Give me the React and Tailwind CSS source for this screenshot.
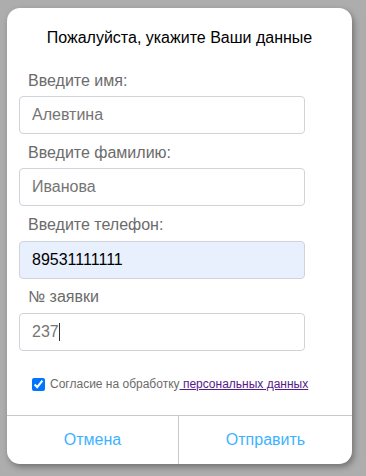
const fields = [
  { label: 'Введите имя:', value: 'Алевтина' },
  { label: 'Введите фамилию:', value: 'Иванова' },
  { label: 'Введите телефон:', value: '89531111111', filled: true, tall: true },
  { label: '№ заявки', value: '237', caret: true, tall: true, tight: true },
];

function Field({ label, value, filled, caret, tall, tight }) {
  return (
    <div className={'flex flex-col ' + (tight ? 'mt-[9px]' : 'mt-[10px]')}>
      <div className={(tall ? 'h-[25px]' : 'h-[24px]') + ' pl-[9px] text-[16px] leading-[18px] text-[#6b6b6b]'}>{label}</div>
      <div
        className={
          'w-[286px] h-[38px] rounded-[4px] border border-[#cfd3da] pl-[12px] flex items-center text-[16px] ' +
          (filled ? 'bg-[#e8f0fe] text-black' : 'bg-white text-[#757575]')
        }
      >
        <span>{value}</span>
        {caret && <span className="inline-block w-px h-[18px] bg-[#333]" />}
      </div>
    </div>
  );
}

export default function App() {
  return (
    <div className="w-[366px] h-[476px] bg-[#adadad] pt-[8px] pl-[7px] font-['Liberation_Sans',Arial,sans-serif]">
      <div className="w-[345px] h-[456px] bg-white rounded-[13px] shadow-[2px_3px_6px_rgba(0,0,0,0.35)] flex flex-col overflow-hidden">
        <div className="pt-[21px] text-center text-[16px] leading-[18px] text-black">
          Пожалуйста, укажите Ваши данные
        </div>

        <div className="pl-[12px] pt-[15px] flex flex-col">
          {fields.map((f) => (
            <Field key={f.label} {...f} />
          ))}
        </div>

        <label className="flex items-center pl-[25px] mt-[24px] text-[12px] text-[#6b6b6b]">
          <input type="checkbox" defaultChecked className="w-[13px] h-[13px] m-0 accent-[#0075ff]" />
          <span className="ml-[5px]">
            Согласие на обработку
            <a href="#" className="text-[#551a8b] underline"> персональных данных</a>
          </span>
        </label>

        <div className="mt-auto h-[49px] border-t border-[#c8c8c8] flex">
          <button className="w-[172px] border-r border-[#c8c8c8] text-[16px] text-[#3db2ff]">Отмена</button>
          <button className="flex-1 text-[16px] text-[#3db2ff]">Отправить</button>
        </div>
      </div>
    </div>
  );
}
